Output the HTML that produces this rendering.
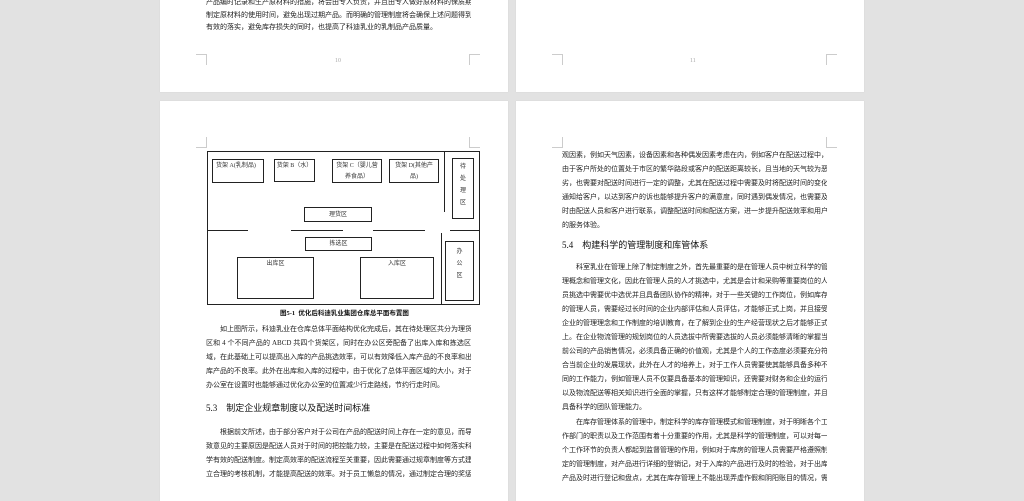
<!DOCTYPE html>
<html><head><meta charset="utf-8"><style>
body{margin:0;width:1024px;height:483px;background:#e2e2e2;position:relative;overflow:hidden;font-family:"Liberation Serif","Noto Sans CJK SC",sans-serif;}
.pg{position:absolute;background:#fff;box-shadow:0 0 1px #ccc;}
.l{position:absolute;width:265px;height:11px;font-size:7px;line-height:11px;color:#222;text-align:justify;text-align-last:justify;overflow:hidden;white-space:nowrap;}
.n{text-align-last:left;}
.i{text-indent:14px;}
.h{position:absolute;font-size:9px;color:#111;line-height:12px;white-space:nowrap;}
.c{position:absolute;border-color:#ccc;border-style:solid;width:10px;height:10px;}
.b{position:absolute;border:1px solid #222;box-sizing:border-box;font-size:6px;color:#333;text-align:center;line-height:11px;padding-top:1px;}
.ln{position:absolute;background:#222;}
</style></head><body>
<div class="pg" style="left:160px;top:-10px;width:348px;height:102px"></div>
<div class="pg" style="left:516px;top:-10px;width:348px;height:102px"></div>
<div class="pg" style="left:160px;top:101px;width:348px;height:400px"></div>
<div class="pg" style="left:516px;top:101px;width:348px;height:400px"></div>

<!-- page 10 -->
<div class="l" style="left:206px;top:-3px">产品编时记录和生产原材料的措施，将会由专人负责，并且由专人做好原材料的保质期，</div>
<div class="l" style="left:206px;top:10px">制定原材料的使用时间，避免出现过期产品。而明确的管理制度将会确保上述问题得到</div>
<div class="l n" style="left:206px;top:22px">有效的落实，避免库存损失的同时，也提高了科迪乳业的乳制品产品质量。</div>
<div class="c" style="left:196px;top:54px;border-width:1px 1px 0 0"></div>
<div class="c" style="left:469px;top:54px;border-width:1px 0 0 1px"></div>
<div class="h" style="left:335px;top:55px;font-size:6px;color:#aaa">10</div>
<div class="c" style="left:552px;top:54px;border-width:1px 1px 0 0"></div>
<div class="c" style="left:826px;top:54px;border-width:1px 0 0 1px"></div>
<div class="h" style="left:690px;top:55px;font-size:6px;color:#aaa">11</div>

<!-- page 2 left -->
<div class="c" style="left:196px;top:137px;border-width:0 1px 1px 0"></div>
<div class="c" style="left:469px;top:137px;border-width:0 0 1px 1px"></div>
<div class="b" style="left:207px;top:151px;width:273px;height:154px"></div>
<div class="b" style="left:212px;top:159px;width:52px;height:24px;text-align:left;padding-left:3px">货架 A(乳制品)</div>
<div class="b" style="left:274px;top:159px;width:41px;height:23px">货架 B（水）</div>
<div class="b" style="left:332px;top:159px;width:50px;height:24px">货架 C（婴儿营<br>养食品）</div>
<div class="b" style="left:389px;top:159px;width:50px;height:24px">货架 D(其他产<br>品)</div>
<div class="ln" style="left:444px;top:151px;width:1px;height:61px"></div>
<div class="b" style="left:452px;top:158px;width:22px;height:61px;padding:2px 5px;line-height:12px">待处理区</div>
<div class="b" style="left:304px;top:207px;width:68px;height:15px;line-height:12px">理货区</div>
<div class="ln" style="left:207px;top:230px;width:41px;height:1px"></div>
<div class="ln" style="left:291px;top:230px;width:52px;height:1px"></div>
<div class="ln" style="left:373px;top:230px;width:52px;height:1px"></div>
<div class="ln" style="left:450px;top:230px;width:29px;height:1px"></div>
<div class="ln" style="left:441px;top:233px;width:1px;height:71px"></div>
<div class="b" style="left:305px;top:237px;width:67px;height:14px;line-height:11px">拣选区</div>
<div class="b" style="left:237px;top:257px;width:77px;height:42px">出库区</div>
<div class="b" style="left:360px;top:257px;width:74px;height:42px">入库区</div>
<div class="b" style="left:445px;top:241px;width:29px;height:60px;padding:4px 9px;line-height:12px">办公区</div>
<div class="h" style="left:280px;top:308px;font-size:6.5px;font-weight:bold;color:#111">图5-1&nbsp; 优化后科迪乳业集团仓库总平面布置图</div>

<div class="l i" style="left:206px;top:324px">如上图所示，科迪乳业在仓库总体平面结构优化完成后，其在待处理区共分为理货</div>
<div class="l" style="left:206px;top:338px">区和 4 个不同产品的 ABCD 共四个货架区，同时在办公区旁配备了出库入库和拣选区</div>
<div class="l" style="left:206px;top:352px">域，在此基础上可以提高出入库的产品挑选效率，可以有效降低入库产品的不良率和出</div>
<div class="l" style="left:206px;top:366px">库产品的不良率。此外在出库和入库的过程中，由于优化了总体平面区域的大小，对于</div>
<div class="l n" style="left:206px;top:380px">办公室在设置时也能够通过优化办公室的位置减少行走路线，节约行走时间。</div>
<div class="h" style="left:206px;top:402px">5.3&nbsp;&nbsp;&nbsp; 制定企业规章制度以及配送时间标准</div>
<div class="l i" style="left:206px;top:427px">根据前文所述，由于部分客户对于公司在产品的配送时间上存在一定的意见，而导</div>
<div class="l" style="left:206px;top:441px">致意见的主要原因是配送人员对于时间的把控能力较，主要是在配送过程中如何落实科</div>
<div class="l" style="left:206px;top:455px">学有效的配送制度。制定高效率的配送流程至关重要，因此需要通过规章制度等方式建</div>
<div class="l" style="left:206px;top:469px">立合理的考核机制，才能提高配送的效率。对于员工懒怠的情况，通过制定合理的奖惩</div>

<!-- page 2 right -->
<div class="c" style="left:552px;top:137px;border-width:0 1px 1px 0"></div>
<div class="c" style="left:826px;top:137px;border-width:0 0 1px 1px"></div>
<div class="l" style="left:562px;top:150px">观因素，例如天气因素，设备因素和各种偶发因素考虑在内，例如客户在配送过程中，</div>
<div class="l" style="left:562px;top:164px">由于客户所处的位置处于市区的繁华路段或客户的配送距离较长，且当地的天气较为恶</div>
<div class="l" style="left:562px;top:178px">劣，也需要对配送时间进行一定的调整，尤其在配送过程中需要及时将配送时间的变化</div>
<div class="l" style="left:562px;top:192px">通知给客户，以达到客户的诉也能够提升客户的满意度，同时遇到偶发情况，也需要及</div>
<div class="l" style="left:562px;top:206px">时由配送人员和客户进行联系，调整配送时间和配送方案，进一步提升配送效率和用户</div>
<div class="l n" style="left:562px;top:220px">的服务体验。</div>
<div class="h" style="left:562px;top:239px">5.4&nbsp;&nbsp;&nbsp; 构建科学的管理制度和库管体系</div>
<div class="l i" style="left:562px;top:262px">科室乳业在管理上除了制定制度之外，首先最重要的是在管理人员中树立科学的管</div>
<div class="l" style="left:562px;top:276px">理概念和管理文化，因此在管理人员的人才挑选中，尤其是会计和采购等重要岗位的人</div>
<div class="l" style="left:562px;top:290px">员挑选中需要优中选优并且具备团队协作的精神，对于一些关键的工作岗位，例如库存</div>
<div class="l" style="left:562px;top:304px">的管理人员，需要经过长时间的企业内部评估和人员评估，才能够正式上岗，并且接受</div>
<div class="l" style="left:562px;top:318px">企业的管理理念和工作制度的培训教育，在了解到企业的生产经营现状之后才能够正式</div>
<div class="l" style="left:562px;top:332px">上。在企业物流管理的规划岗位的人员选拔中所需要选拔的人员必须能够清晰的掌握当</div>
<div class="l" style="left:562px;top:346px">前公司的产品销售情况，必须具备正确的价值观，尤其是个人的工作态度必须要充分符</div>
<div class="l" style="left:562px;top:360px">合当前企业的发展现状，此外在人才的培养上，对于工作人员需要使其能够具备多种不</div>
<div class="l" style="left:562px;top:374px">同的工作能力，例如管理人员不仅要具备基本的管理知识，还需要对财务和企业的运行</div>
<div class="l" style="left:562px;top:388px">以及物流配送等相关知识进行全面的掌握，只有这样才能够制定合理的管理制度，并且</div>
<div class="l n" style="left:562px;top:402px">具备科学的团队管理能力。</div>
<div class="l i" style="left:562px;top:417px">在库存管理体系的管理中，制定科学的库存管理模式和管理制度，对于明晰各个工</div>
<div class="l" style="left:562px;top:431px">作部门的职责以及工作范围有着十分重要的作用，尤其是科学的管理制度，可以对每一</div>
<div class="l" style="left:562px;top:445px">个工作环节的负责人都起到监督管理的作用，例如对于库房的管理人员需要严格遵照制</div>
<div class="l" style="left:562px;top:459px">定的管理制度，对产品进行详细的登销记，对于入库的产品进行及时的检验，对于出库</div>
<div class="l" style="left:562px;top:473px">产品及时进行登记和盘点，尤其在库存管理上不能出现弄虚作假和阴阳账目的情况，需</div>
</body></html>
